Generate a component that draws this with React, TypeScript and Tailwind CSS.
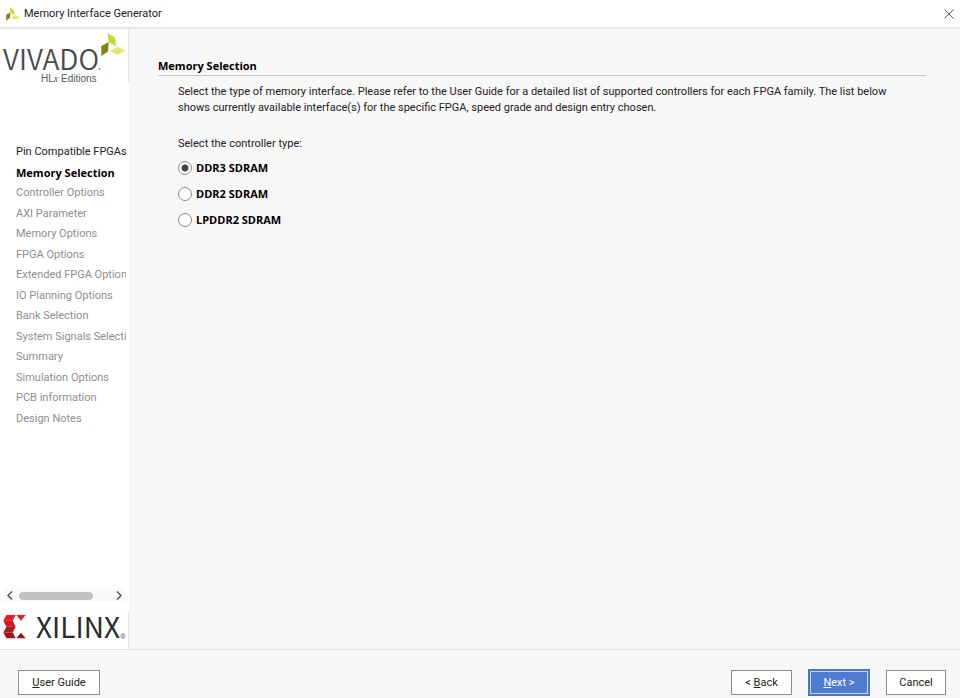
import { useState } from 'react';

const STEPS = [
  'Pin Compatible FPGAs',
  'Memory Selection',
  'Controller Options',
  'AXI Parameter',
  'Memory Options',
  'FPGA Options',
  'Extended FPGA Options',
  'IO Planning Options',
  'Bank Selection',
  'System Signals Selection',
  'Summary',
  'Simulation Options',
  'PCB information',
  'Design Notes',
];

const CURRENT = 1;

const CONTROLLERS = ['DDR3 SDRAM', 'DDR2 SDRAM', 'LPDDR2 SDRAM'];

function Leaf({ className }: { className: string }) {
  return (
    <svg viewBox="0 0 25 23" className={className} aria-hidden="true">
      <path d="M6.500 0 L14 4.500 L15.200 13.200 L7.800 9 Z" fill="#c8d92b" />
      <path d="M0.300 13 L7.800 9 L7 18.500 L0.300 23 Z" fill="#7f860b" />
      <path d="M9 18 L17 13.700 L24.500 17.700 L16.500 21.700 Z" fill="#e0e76f" />
    </svg>
  );
}

function VivadoLogo() {
  return (
    <svg viewBox="0 0 128 52" className="h-[52px] w-full overflow-visible" role="img" aria-label="Vivado HLx Editions">
      <text x="3" y="41" fontSize="28" fill="#4a4b4d" className="font-['Noto_Sans_CJK_SC',sans-serif] font-[350]">VIVADO</text>
      <circle cx="99.500" cy="40" r="0.800" fill="#58595b" />
      <text x="41" y="53" fontSize="10" fill="#58595b" className="font-['Liberation_Sans',sans-serif]">
        HL<tspan fontStyle="italic" className="font-['Liberation_Serif',serif]">x</tspan> Editions
      </text>
    </svg>
  );
}

function XilinxLogo() {
  return (
    <svg viewBox="0 0 128 37" className="h-[37px] w-full" role="img" aria-label="Xilinx">
      <path d="M6.500 3 L15.700 3 L12.700 8.700 L3.300 8.700 Z" fill="#ed1c24" />
      <path d="M3.300 8.700 L12.700 8.700 L15.700 14.700 L6.500 14.700 Z" fill="#cf1920" />
      <path d="M6.500 14.700 L15.700 14.700 L12.700 20.500 L3.300 20.500 Z" fill="#b5161b" />
      <path d="M3.300 20.500 L12.700 20.500 L15.700 26.300 L6.500 26.300 Z" fill="#9a1418" />
      <path d="M16.300 3 L25.700 3 L21 8.700 Z" fill="#ed1c24" />
      <path d="M16.300 26.300 L25.700 26.300 L21 20.700 Z" fill="#9a1418" />
      <text x="36" y="26" fontSize="28" fill="#2d2b2c" className="font-['Noto_Sans_CJK_SC',sans-serif]">XILINX</text>
      <text x="120" y="27" fontSize="7" fill="#58595b" className="font-['Open_Sans',sans-serif]">®</text>
    </svg>
  );
}

export default function App() {
  const [controller, setController] = useState(CONTROLLERS[0]);

  return (
    <div className="flex min-h-screen flex-col bg-[#f7f7f7] font-['Roboto',sans-serif] text-[11px] leading-4 text-[#222]">
      <header className="flex h-[29px] items-center border-b-2 border-[#e6e6e6] bg-white pr-1 pl-1.5">
        <Leaf className="h-3.5 w-3.5" />
        <h1 className="ml-1 flex-1">Memory Interface Generator</h1>
        <button type="button" aria-label="Close" className="p-0.5">
          <svg viewBox="0 0 10 10" className="h-2.5 w-2.5" stroke="#555" fill="none">
            <path d="M0.500 0.500 L9.500 9.500 M9.500 0.500 L0.500 9.500" />
          </svg>
        </button>
      </header>

      <div className="flex flex-1">
        <aside className="flex w-[129px] shrink-0 flex-col bg-white">
          <div className="relative border-r border-[#e4e4e4] pb-px">
            <VivadoLogo />
            <Leaf className="absolute top-1 left-[101px] h-[23px] w-[25px]" />
          </div>
          <nav className="mt-[62px] mr-[3px] ml-4 flex-1 overflow-hidden">
            <ul className="flex h-[283px] flex-col justify-between">
              {STEPS.map((step, i) => (
                <li
                  key={step}
                  aria-current={i === CURRENT ? 'step' : undefined}
                  className={
                    i === CURRENT
                      ? "font-['Open_Sans',sans-serif] font-bold whitespace-nowrap text-black"
                      : i < CURRENT
                        ? 'whitespace-nowrap'
                        : 'whitespace-nowrap text-[#8e8e8e]'
                  }
                >
                  {step}
                </li>
              ))}
            </ul>
          </nav>
          <div className="mr-1 mb-2.5 ml-1 flex h-[13px] items-center gap-1.5 bg-[#f9f9f9]">
            <button type="button" aria-label="Scroll left" className="pl-[3px]">
              <svg viewBox="0 0 6 9" className="h-[9px] w-1.5" fill="none" stroke="#555" strokeWidth="1.500">
                <path d="M5 0.500 L1 4.500 L5 8.500" />
              </svg>
            </button>
            <div className="flex-1">
              <div className="h-2 w-[74px] rounded-full bg-[#c1c1c1]" />
            </div>
            <button type="button" aria-label="Scroll right" className="pr-[3px]">
              <svg viewBox="0 0 6 9" className="h-[9px] w-1.5" fill="none" stroke="#555" strokeWidth="1.500">
                <path d="M1 0.500 L5 4.500 L1 8.500" />
              </svg>
            </button>
          </div>
          <div className="border-r border-[#e4e4e4]">
            <XilinxLogo />
          </div>
        </aside>

        <main className="flex-1 pt-[29px] pr-[34px] pl-[29px]">
          <h2 className="border-b border-[#c6c6c6] pb-px font-['Open_Sans',sans-serif] font-bold text-black">
            Memory Selection
          </h2>
          <div className="pt-2 pr-6 pl-5">
            <p>
              Select the type of memory interface. Please refer to the User Guide for a detailed list of supported
              controllers for each FPGA family. The list below shows currently available interface(s) for the specific
              FPGA, speed grade and design entry chosen.
            </p>
            <fieldset className="mt-5">
              <legend className="mb-2">Select the controller type:</legend>
              {CONTROLLERS.map((name) => (
                <label
                  key={name}
                  className="mb-2.5 flex items-center gap-1 font-['Open_Sans',sans-serif] font-bold text-black"
                >
                  <input
                    type="radio"
                    name="controller"
                    checked={controller === name}
                    onChange={() => setController(name)}
                    className="h-3.5 w-3.5 appearance-none rounded-full border border-[#8c8c8c] bg-white checked:bg-[radial-gradient(circle,#444_3px,#fff_4px)]"
                  />
                  {name}
                </label>
              ))}
            </fieldset>
          </div>
        </main>
      </div>

      <footer className="flex h-[49px] items-center gap-4 border-t border-[#e2e2e2] pt-4 pr-3.5 pl-[18px]">
        <button type="button" className="mr-auto h-[25px] w-[82px] border border-[#8c8c8c] bg-white pt-px">
          <u>U</u>ser Guide
        </button>
        <button type="button" className="h-[25px] w-[61px] border border-[#8c8c8c] bg-white pt-px">
          &lt; <u>B</u>ack
        </button>
        <button
          type="button"
          className="h-[27px] w-[62px] border-2 border-[#4a76cc] bg-[#4f7bd0] pt-px text-white inset-ring inset-ring-[#c9d7f2]"
        >
          <u>N</u>ext &gt;
        </button>
        <button type="button" className="h-[25px] w-[60px] border border-[#8c8c8c] bg-white pt-px">
          Cancel
        </button>
      </footer>
    </div>
  );
}
